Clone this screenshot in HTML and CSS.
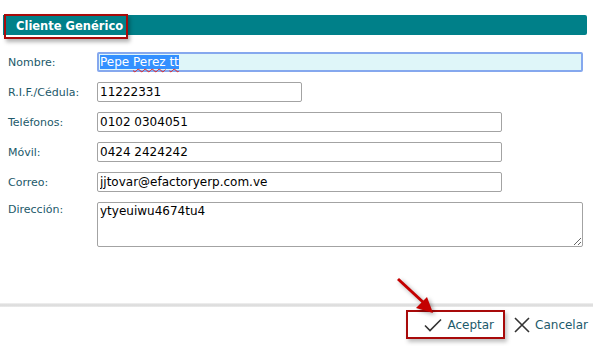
FILE: index.html
```html
<!DOCTYPE html>
<html lang="es">
<head>
    <meta charset="UTF-8">
    <meta name="viewport" content="width=device-width, initial-scale=1.0">
    <title>Cliente Genérico</title>
    <link rel="stylesheet" href="styles.css">
</head>
<body>
    <div class="dialog">
        <!-- Title bar -->
        <div class="title-bar">
            <span class="title">Cliente Genérico</span>
        </div>

        <!-- Client form -->
        <form class="client-form">
            <label class="label">Nombre:</label>
            <div class="field field-focus wide"><span class="selected">Pepe <span class="typo">Perez</span> <span class="typo">tt</span></span></div>

            <label class="label" for="rif">R.I.F./Cédula:</label>
            <input class="field short" type="text" id="rif" value="11222331">

            <label class="label" for="tel">Teléfonos:</label>
            <input class="field medium" type="text" id="tel" value="0102 0304051">

            <label class="label" for="movil">Móvil:</label>
            <input class="field medium" type="text" id="movil" value="0424 2424242">

            <label class="label" for="correo">Correo:</label>
            <input class="field medium" type="text" id="correo" value="jjtovar@efactoryerp.com.ve">

            <label class="label label-top" for="dir">Dirección:</label>
            <textarea class="field wide area" id="dir">ytyeuiwu4674tu4</textarea>
        </form>

        <!-- Buttons -->
        <div class="footer">
            <button type="button" class="btn btn-marked">
                <svg width="18" height="14" viewBox="0 0 18 14"><path d="M1 7.5 L6 12.5 L17 1.5" fill="none" stroke="#333" stroke-width="1.6"/></svg>
                Aceptar
            </button>
            <button type="button" class="btn">
                <svg width="16" height="16" viewBox="0 0 16 16"><path d="M1 1 L15 15 M15 1 L1 15" fill="none" stroke="#333" stroke-width="1.6"/></svg>
                Cancelar
            </button>
        </div>

        <!-- Annotation arrow -->
        <svg class="arrow" width="60" height="50" viewBox="0 0 60 50">
            <line x1="18" y1="8" x2="44" y2="32" stroke="#c40000" stroke-width="3"/>
            <polygon points="53,42 36,37 47,26" fill="#c40000"/>
        </svg>
    </div>
</body>
</html>
```

FILE: styles.css
```css
body {
    margin: 0;
    font-family: "DejaVu Sans", Verdana, sans-serif;
    background: #ffffff;
}

.dialog {
    position: relative;
    width: 593px;
    height: 346px;
    padding-top: 15px;
    box-sizing: border-box;
}

.title-bar {
    margin: 0 6px 0 3px;
    height: 20px;
    background: #008089;
    border-radius: 0 2px 2px 0;
}

.title {
    position: relative;
    display: inline-block;
    padding: 0 8px 0 13px;
    line-height: 20px;
    font-size: 11.5px;
    font-weight: bold;
    color: #ffffff;
}

/* red frame drawn around the title */
.title::after {
    content: "";
    position: absolute;
    left: 1px;
    top: -2px;
    width: 120px;
    height: 21px;
    border: 2px solid #a80a0a;
    box-shadow: 2px 3px 4px rgba(0, 0, 0, 0.3);
}

.client-form {
    display: grid;
    grid-template-columns: 89px 1fr;
    row-gap: 10px;
    margin: 17px 0 0 8px;
    align-items: center;
}

.label {
    font-size: 11px;
    color: #22596a;
}

.label-top {
    align-self: start;
    padding-top: 1px;
}

.field {
    box-sizing: border-box;
    height: 20px;
    margin: 0;
    padding: 0 2px;
    border: 1px solid #a3a3a3;
    border-radius: 2px;
    font-family: "DejaVu Sans", Verdana, sans-serif;
    font-size: 12px;
    color: #000000;
    background: #ffffff;
}

.field-focus {
    border: 2px solid #85a8ee;
    background: #dff6f9;
    line-height: 16px;
    padding: 0 1px;
}

.selected {
    background: #3390ff;
    color: #ffffff;
}

.typo {
    text-decoration: underline wavy #e02020;
    text-decoration-thickness: 1px;
    text-underline-offset: 2px;
}

.wide {
    width: 486px;
}

.medium {
    width: 405px;
}

.short {
    width: 205px;
}

.area {
    height: 45px;
    padding-top: 1px;
    resize: both;
}

.footer {
    margin-top: 56px;
    height: 4px;
    background: linear-gradient(#f2f2f2, #d9d9d9, #ececec);
    display: flex;
    justify-content: flex-end;
    align-items: flex-start;
    gap: 9px;
    padding-right: 5px;
}

.btn {
    display: flex;
    align-items: center;
    gap: 5px;
    margin-top: 9px;
    height: 25px;
    padding: 0;
    border: none;
    background: none;
    font-family: "DejaVu Sans", Verdana, sans-serif;
    font-size: 12px;
    color: #1d5a6b;
}

.btn-marked {
    height: 29px;
    margin-top: 7px;
    padding: 0 11px 0 18px;
    outline: 2px solid #a80a0a;
    outline-offset: -2px;
    box-shadow: 2px 3px 4px rgba(0, 0, 0, 0.25);
}

.arrow {
    position: absolute;
    left: 380px;
    top: 271px;
    filter: drop-shadow(2px 2px 2px rgba(0, 0, 0, 0.35));
}
```
